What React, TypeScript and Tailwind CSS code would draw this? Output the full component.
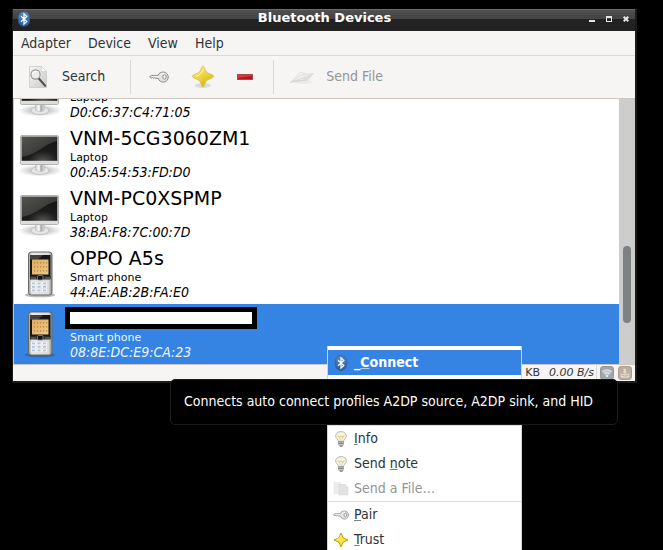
import React from "react";

type IconProps = { className?: string };

function BluetoothIcon({ className = "" }: IconProps) {
  return (
    <svg className={className} viewBox="0 0 16 16" aria-hidden="true">
      <defs>
        <linearGradient id="bt" x1="0" y1="0" x2="0" y2="1">
          <stop offset="0" stopColor="#5b8cc6" />
          <stop offset="1" stopColor="#2a5a9a" />
        </linearGradient>
      </defs>
      <rect x="2.3" y="0.6" width="11.4" height="14.8" rx="5.7" fill="url(#bt)" stroke="#2c568f" strokeWidth="0.6" />
      <path d="M5 5.2 10.8 10.6 8 13.2V2.8l2.8 2.6L5 10.8" fill="none" stroke="#fff" strokeWidth="1.2" />
    </svg>
  );
}

function SearchIcon() {
  return (
    <svg className="size-6" viewBox="0 0 24 24" aria-hidden="true">
      <defs>
        <linearGradient id="page" x1="0" y1="0" x2="1" y2="1">
          <stop offset="0" stopColor="#f8f8f8" />
          <stop offset="1" stopColor="#c8c8c8" />
        </linearGradient>
      </defs>
      <path d="M3.5 1.5h12l5 5v16h-17z" fill="url(#page)" stroke="#d0d0ce" />
      <path d="M15.5 1.5v5h5z" fill="#fff" stroke="#d0d0ce" strokeWidth="0.7" />
      <path d="M12.8 13.5 19.3 20.8" stroke="#4c4c4c" strokeWidth="2" strokeLinecap="round" />
      <circle cx="9.5" cy="9.5" r="4.6" fill="#eceeee" stroke="#8f928f" strokeWidth="1.1" />
      <path d="M6.5 9a3.2 3.2 0 0 1 5-2" fill="none" stroke="#fff" />
    </svg>
  );
}

function KeyIcon({ className = "" }: IconProps) {
  return (
    <svg className={className} viewBox="0 0 20 14" aria-hidden="true">
      <path
        d="M9 5.4H2.5L.7 6.6l1.7 1.7 1.2-.8 1 .9 1.300-.9 1 .9H9.200c.8 2.500 3 3.900 5.400 3.700 2.700-.2 4.700-2.400 4.700-5S17.200 2 14.400 2C11.900 2 9.800 3.200 9 5.400z"
        fill="#e2e2e0" stroke="#8b8e89" strokeWidth="1"
      />
      <path d="M3 6.500h6.500M11.300 4.800a4 4 0 0 1 4-1.300" fill="none" stroke="#fff" strokeWidth="0.8" />
      <ellipse cx="15.500" cy="7" rx="1.700" ry="2.200" fill="#f8f8f7" stroke="#8b8e89" strokeWidth="1" />
    </svg>
  );
}

function StarIcon({ className = "", shadow = false }: IconProps & { shadow?: boolean }) {
  return (
    <svg className={className} viewBox="0 0 24 24" aria-hidden="true">
      <defs>
        <linearGradient id="star" x1="0" y1="0" x2="0.6" y2="1">
          <stop offset="0" stopColor="#f8f19c" />
          <stop offset="0.6" stopColor="#ead23c" />
          <stop offset="1" stopColor="#d3b516" />
        </linearGradient>
      </defs>
      {shadow && <ellipse cx="12" cy="20.5" rx="8" ry="2.5" fill="#000" opacity="0.1" />}
      {shadow ? (
        <path
          d="M12 1c1.100 0 1.900 4.200 3.500 6 1.900 1.700 7.300 2.900 7.300 4.300s-5.300 2.800-7.300 4.500C13.900 17.700 13.100 22 12 22s-1.900-4.300-3.600-6.200C6.500 14.100 1.200 12.700 1.200 11.300S6.500 8.700 8.400 7C10.100 5.200 10.900 1 12 1z"
          fill="url(#star)" stroke="#d2b837" strokeWidth="0.7"
        />
      ) : (
        <path
          d="M12 1.500 15.200 8.800 22.500 12 15.200 15.200 12 22.500 8.800 15.200 1.500 12 8.800 8.800z"
          fill="#f6e34d" stroke="#c3a000" strokeWidth="1.500" strokeLinejoin="round"
        />
      )}
      <path d="M12 4.500c-.5 2.500-3 5.700-7 6.800" fill="none" stroke="#fffbd0" strokeWidth="0.9" />
    </svg>
  );
}

function RemoveIcon() {
  return (
    <svg className="h-[6px] w-4" viewBox="0 0 16 6" aria-hidden="true">
      <rect x="0.5" y="0.5" width="15" height="5" fill="#bd1212" stroke="#a8494a" />
      <path d="M1 1h14v1L1 4z" fill="#dc5757" opacity="0.6" />
    </svg>
  );
}

function PlaneIcon() {
  return (
    <svg className="size-6" viewBox="0 0 24 24" aria-hidden="true">
      <ellipse cx="13" cy="17" rx="10" ry="2" fill="#000" opacity="0.04" />
      <path d="M.5 17.500 10.500 7l5.500 2z" fill="#f1f2f1" stroke="#d8dad8" strokeWidth="0.7" />
      <path d="M7 15.500 23.500 8.500 18 15.800l-6-1.600z" fill="#dcdddc" />
      <path d="M.5 17.500 12 9.500l11.500-1L8.500 14.500z" fill="#eeefee" stroke="#d5d7d5" strokeWidth="0.600" />
      <path d="M.5 17.500 8.500 14.500l9.500 1.300z" fill="#cfd1cf" opacity="0.8" />
    </svg>
  );
}

function ComputerIcon() {
  return (
    <svg className="h-12 w-12" viewBox="0 0 48 48" aria-hidden="true">
      <defs>
        <radialGradient id="floor">
          <stop offset="0.3" stopColor="#999" stopOpacity="0.6" />
          <stop offset="1" stopColor="#999" stopOpacity="0" />
        </radialGradient>
        <radialGradient id="screen" cx="0.6" cy="1" r="1">
          <stop offset="0" stopColor="#565654" />
          <stop offset="0.4" stopColor="#1c1c1c" />
          <stop offset="1" stopColor="#151515" />
        </radialGradient>
        <linearGradient id="glare" x1="0" y1="0" x2="1" y2="1">
          <stop offset="0" stopColor="#52544f" />
          <stop offset="1" stopColor="#393a37" stopOpacity="0.7" />
        </linearGradient>
        <linearGradient id="neck" x1="0" x2="1">
          <stop offset="0" stopColor="#c9c9c9" />
          <stop offset="0.4" stopColor="#fff" />
          <stop offset="0.6" stopColor="#a8a8a8" />
          <stop offset="1" stopColor="#ddd" />
        </linearGradient>
      </defs>
      <ellipse cx="24" cy="40.5" rx="22" ry="6" fill="url(#floor)" />
      <ellipse cx="24" cy="40.5" rx="9" ry="4" fill="#e5e5e5" stroke="#bababa" strokeWidth="0.8" />
      <path d="M19.500 34h9v6c-2 2-7 2-9 0z" fill="url(#neck)" stroke="#bbb" strokeWidth="0.6" />
      <rect x="4.500" y="5.500" width="38" height="29" rx="1.500" fill="#ededed" stroke="#b3b5b2" />
      <rect x="5.500" y="6.500" width="36" height="24.500" fill="url(#screen)" stroke="#bbbdb9" strokeWidth="0.5" />
      <path d="M6 7h35v4C28 14 22 24 6 27z" fill="url(#glare)" />
      <path d="M5 31h37v3H5z" fill="#dcdddb" />
    </svg>
  );
}

const KEY_COLUMNS = [17, 22.5, 28];
const KEY_ROWS = [34.5, 38, 41.5];

function PhoneIcon() {
  return (
    <svg className="h-12 w-12" viewBox="0 0 48 48" aria-hidden="true">
      <defs>
        <linearGradient id="body" x1="0" x2="1">
          <stop offset="0" stopColor="#9b9d99" />
          <stop offset="0.15" stopColor="#e8e8e7" />
          <stop offset="0.85" stopColor="#dcdddb" />
          <stop offset="1" stopColor="#888a85" />
        </linearGradient>
        <linearGradient id="lcd" x1="0" y1="0" x2="1" y2="1">
          <stop offset="0" stopColor="#dfaa5e" />
          <stop offset="1" stopColor="#f0c988" />
        </linearGradient>
      </defs>
      <ellipse cx="24" cy="45" rx="15" ry="2.3" fill="#333" opacity="0.35" />
      <rect x="12.500" y="2" width="23.500" height="43" rx="2.800" fill="url(#body)" stroke="#666864" />
      <path d="M14 5h20.500v23.500H14z" fill="#171819" />
      <path d="M14 5h13l-5 4.500h-8z" fill="#6c6e6a" opacity="0.5" />
      <path d="M16 9.500h16.500v15H16z" fill="url(#lcd)" />
      <g fill="#c08f4b">
        {[12, 16, 20].map((y) =>
          [18, 21, 24, 27, 30].map((x) => <rect key={`${x}-${y}`} x={x} y={y} width="1.200" height="1.600" />)
        )}
      </g>
      <path d="M14 26h20.500v3.500H14z" fill="#2a2d30" />
      <rect x="21.500" y="25.500" width="5.500" height="4.500" rx="1" fill="#10151b" stroke="#8294a5" strokeWidth="0.8" />
      <path d="M15 28h5M29 28h5" stroke="#74777a" />
      <g fill="#f6f6f6">
        {KEY_ROWS.map((y) =>
          KEY_COLUMNS.map((x) => (
            <g key={`${x}-${y}`}>
              <rect x={x - 2} y={y - 2.5} width="5" height="2.8" />
              <rect x={x - 1} y={y - 2} width="3" height="1.8" fill="#b3c3da" />
            </g>
          ))
        )}
      </g>
    </svg>
  );
}

function BulbIcon() {
  return (
    <svg className="size-4" viewBox="0 0 16 16" aria-hidden="true">
      <path d="M8 .6C4.800.6 2.600 2.500 2.600 5c0 2.300 2.700 3.300 2.900 5.500h5c.2-2.200 2.900-3.200 2.900-5.500C13.400 2.500 11.200.6 8 .6z" fill="#f4f3e6" stroke="#b3b4ab" strokeWidth="0.9" />
      <path d="M4.500 4.500 6.300 6l1.700-.8L9.700 6l1.800-1.500" fill="none" stroke="#ead96a" strokeWidth="1.3" />
      <path d="M6.500 6.200 7.200 10M9.500 6.200 8.800 10" stroke="#c6c5ac" strokeWidth="0.6" />
      <path d="M5.500 10.500h5v3L9 15.500H7l-1.500-2z" fill="#c3c4c1" stroke="#8c8e89" strokeWidth="0.6" />
      <path d="M5.500 12.200h5M7 15h2.500" stroke="#6b6d68" strokeWidth="0.9" />
    </svg>
  );
}

function CopyIcon() {
  return (
    <svg className="size-4" viewBox="0 0 16 16" aria-hidden="true">
      <path d="M1 1.500h6l2 2v9H1z" fill="#ececec" stroke="#e4e4e4" strokeWidth="0.6" />
      <path d="M6 3.500h6.500L15 6v8H6z" fill="#e2e2e2" stroke="#d9d9d9" strokeWidth="0.6" />
      <path d="M12.500 3.500V6H15" fill="#f8f8f8" stroke="#d9d9d9" strokeWidth="0.6" />
    </svg>
  );
}

function WifiBadge() {
  return (
    <svg className="size-[14px]" viewBox="0 0 15 15" aria-hidden="true">
      <rect x="0.500" y="0.500" width="14" height="14" rx="3" fill="#a1a5ac" stroke="#8b8f96" />
      <path d="M2.500 6.200a7 7 0 0 1 10 0L7.500 12z" fill="#c0c4c9" />
      <path d="M2.500 6.200a7 7 0 0 1 10 0M4.500 8.400a4.200 4.200 0 0 1 6 0" fill="none" stroke="#dfe1e4" strokeWidth="1.2" />
      <circle cx="7.500" cy="10.800" r="1.200" fill="#eceef0" />
    </svg>
  );
}

function ServiceBadge() {
  return (
    <svg className="size-[14px]" viewBox="0 0 15 15" aria-hidden="true">
      <rect x="0.500" y="0.500" width="14" height="14" rx="3" fill="#bcaea0" stroke="#a39587" />
      <path d="M2.800 8c1.500 2 7.900 2 9.400 0M2.800 10.300c1.500 2.300 7.900 2.300 9.400 0" fill="none" stroke="#ebe3d9" strokeWidth="1.2" />
      <path d="M6 3h2.500v3.500H10L7.300 8.700 5 6.500h1z" fill="#e3dacf" />
    </svg>
  );
}

type Device = { name?: string; kind: "Laptop" | "Smart phone"; address: string; selected?: boolean };

const DEVICES: Device[] = [
  { kind: "Laptop", address: "D0:C6:37:C4:71:05" },
  { name: "VNM-5CG3060ZM1", kind: "Laptop", address: "00:A5:54:53:FD:D0" },
  { name: "VNM-PC0XSPMP", kind: "Laptop", address: "38:BA:F8:7C:00:7D" },
  { name: "OPPO A5s", kind: "Smart phone", address: "44:AE:AB:2B:FA:E0" },
  { kind: "Smart phone", address: "08:8E:DC:E9:CA:23", selected: true },
];

function DeviceRow({ device }: { device: Device }) {
  return (
    <li
      role="option"
      aria-selected={!!device.selected}
      className={`flex h-[60px] shrink-0 items-start gap-[6px] pl-[2px] ${device.selected ? "bg-[#3584e4] text-[#f0f5fc]" : "text-black"}`}
    >
      <div className="pt-[6px]">{device.kind === "Laptop" ? <ComputerIcon /> : <PhoneIcon />}</div>
      <div className="flex flex-col pt-[1px]">
        {device.selected ? (
          <span className="-ml-[5px] mt-[2px] mb-[2px] h-[22px] w-48 border-[5px] border-black bg-white" />
        ) : (
          <span className="h-[26px] font-['DejaVu_Sans',sans-serif] text-[19px] leading-[26px]">{device.name}</span>
        )}
        <span className="font-['DejaVu_Sans',sans-serif] text-[11px] leading-[13px]">{device.kind}</span>
        <span className="text-sm leading-4 italic">{device.address}</span>
      </div>
    </li>
  );
}

function MenuItem({ icon, children, active, disabled }: { icon: React.ReactNode; children: React.ReactNode; active?: boolean; disabled?: boolean }) {
  return (
    <button
      role="menuitem"
      disabled={disabled}
      className={`flex h-[25px] w-full shrink-0 items-center gap-[5px] pl-[5px] text-left text-sm ${
        active ? "bg-[#3584e4] font-bold text-white" : disabled ? "text-[#929595]" : "text-[#2e3436]"
      }`}
    >
      {icon}
      <span className="pb-[2px]">{children}</span>
    </button>
  );
}

const KEYLINE = "underline underline-offset-1 decoration-1 decoration-current/60";

export default function App() {
  return (
    <div className="relative h-screen overflow-hidden bg-black pt-[9px] pr-[26px] pl-3 font-['DejaVu_Sans_Condensed','DejaVu_Sans',sans-serif] text-[#2e3436]">
      <main className="flex flex-col border-r-2 border-b-2 border-l border-[#1b1b1b] bg-[#f6f5f4]">
        <header className="flex h-[22px] items-center border-t border-[#6c6c6c] bg-linear-to-b from-[#505050] from-0% via-[#424242] via-45% to-[#222] to-45% px-[3px] pb-[3px]">
          <BluetoothIcon className="size-4" />
          <h1 className="flex-1 pb-[2px] pl-7 text-center font-['DejaVu_Sans',sans-serif] text-[13px] leading-4 font-bold text-white">Bluetooth Devices</h1>
          <div className="flex items-center gap-[11px] pr-[3px] text-[#e6e6e6]">
            <button aria-label="Minimize" className="h-[6px] w-[6px] border-b-2" />
            <button aria-label="Maximize" className="h-[6px] w-[6px] border border-t-2" />
            <button aria-label="Close">
              <svg className="size-[6px]" viewBox="0 0 6 6"><path d="M.7.7 5.3 5.3M5.3.7.7 5.3" stroke="currentColor" strokeWidth="2" /></svg>
            </button>
          </div>
        </header>

        <nav className="flex h-[25px] items-center gap-[17px] border-b border-[#dcdad8] px-2 text-sm leading-5">
          <button>Adapter</button>
          <button>Device</button>
          <button>View</button>
          <button>Help</button>
        </nav>

        <div role="toolbar" className="flex h-[43px] items-center border-b border-[#cdc7c2] pl-[13px] text-sm">
          <button className="flex items-center gap-3"><SearchIcon /><span className="pb-[2px]">Search</span></button>
          <div className="ml-[25px] h-[34px] w-px bg-[#dad8d6]" />
          <button aria-label="Pair" className="ml-4"><KeyIcon className="h-[14px] w-6" /></button>
          <button aria-label="Trust" className="ml-5"><StarIcon className="size-6" shadow /></button>
          <button aria-label="Remove" className="ml-[22px]"><RemoveIcon /></button>
          <div className="ml-5 h-[34px] w-px bg-[#dad8d6]" />
          <button disabled className="ml-4 flex items-center gap-3 text-[#929595]"><PlaneIcon /><span className="pb-[2px]">Send File</span></button>
        </div>

        <section className="flex h-[266px] border-x border-b border-[#cdc7c2]">
          <ul role="listbox" aria-label="Devices" className="flex min-w-0 flex-1 flex-col justify-end overflow-hidden bg-white">
            {DEVICES.map((d) => <DeviceRow key={d.address} device={d} />)}
          </ul>
          <div className="flex w-[15px] flex-col items-center justify-end bg-[#cdcdcd] pb-[41px]">
            <div className="h-[77px] w-2 rounded-full bg-[#7e8182]" />
          </div>
        </section>

        <footer className="flex h-4 items-center justify-end pr-[3px] font-['DejaVu_Sans',sans-serif] text-[11px] leading-4">
          <span>KB</span>
          <span className="ml-[9px] italic">0.00 B/s</span>
          <span className="ml-[2px] h-4 w-px bg-[#dcdad8]" />
          <span className="ml-[3px]"><WifiBadge /></span>
          <span className="ml-1"><ServiceBadge /></span>
        </footer>
      </main>

      <div role="menu" className="absolute top-[346px] left-[327px] flex w-[195px] flex-col border-x border-[#d5d3d1] bg-white pt-1">
        <MenuItem active icon={<BluetoothIcon className="size-4" />}>_<span className={KEYLINE}>C</span>onnect</MenuItem>
        <div className="h-[50px]" />
        <hr className="border-[#dededd]" />
        <MenuItem icon={<BulbIcon />}><span className={KEYLINE}>I</span>nfo</MenuItem>
        <MenuItem icon={<BulbIcon />}>Send <span className={KEYLINE}>n</span>ote</MenuItem>
        <MenuItem disabled icon={<CopyIcon />}>Send a File…</MenuItem>
        <hr className="border-[#dededd]" />
        <MenuItem icon={<KeyIcon className="size-4" />}><span className={KEYLINE}>P</span>air</MenuItem>
        <MenuItem icon={<StarIcon className="size-4" />}><span className={KEYLINE}>T</span>rust</MenuItem>
      </div>

      <div role="tooltip" className="absolute top-[379px] left-[170px] w-[448px] rounded-[5px] border border-[#1c1c1c] bg-black px-[13px] pt-[11px] pb-[13px] text-sm leading-5 whitespace-nowrap text-white">
        Connects auto connect profiles A2DP source, A2DP sink, and HID
      </div>
    </div>
  );
}
